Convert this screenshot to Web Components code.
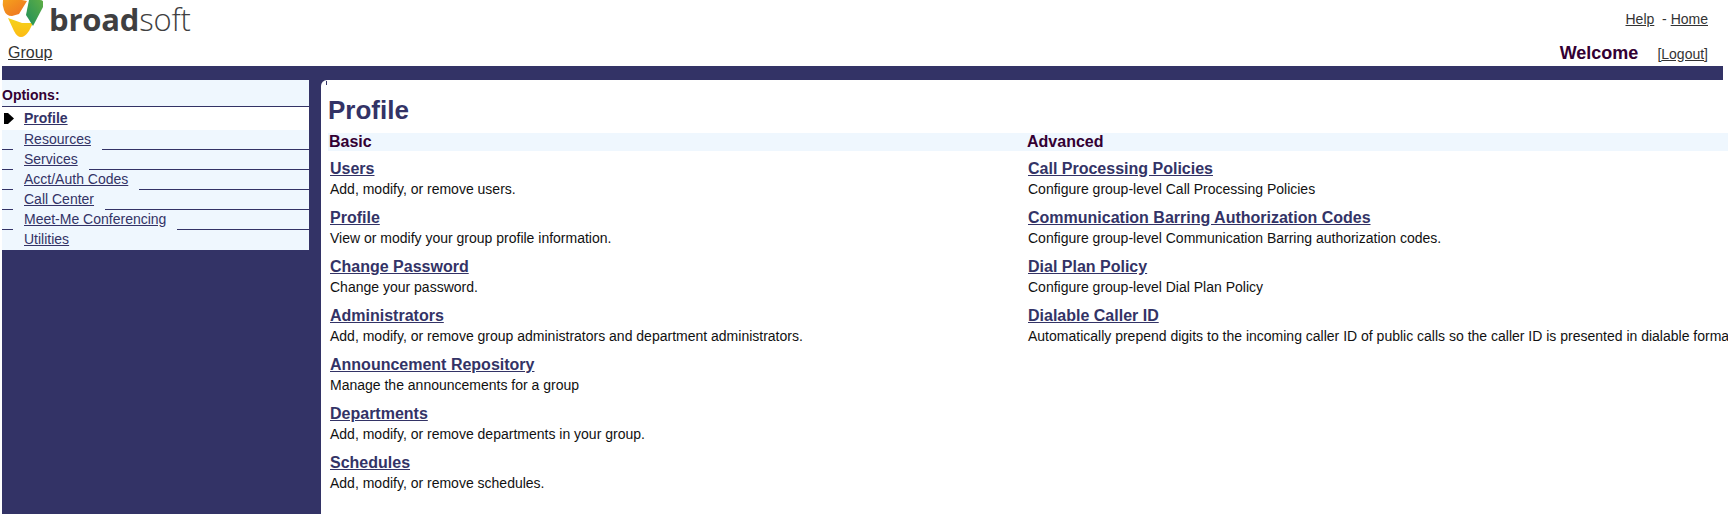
<!DOCTYPE html>
<html lang="en">
<head>
<meta charset="utf-8">
<title>Profile</title>
<style>
  html, body { margin: 0; height: 514px; overflow: hidden; background: #fff; }
  body { font-family: "Liberation Sans", Arial, sans-serif; }
</style>
</head>
<body>
<bw-page>
  <bw-header slot="header"></bw-header>
  <bw-side-nav slot="side">
    <bw-nav-item current>Profile</bw-nav-item>
    <bw-nav-item>Resources</bw-nav-item>
    <bw-nav-item>Services</bw-nav-item>
    <bw-nav-item>Acct/Auth Codes</bw-nav-item>
    <bw-nav-item>Call Center</bw-nav-item>
    <bw-nav-item>Meet-Me Conferencing</bw-nav-item>
    <bw-nav-item last>Utilities</bw-nav-item>
  </bw-side-nav>
  <bw-content slot="main" heading="Profile">
    <bw-section slot="left" title="Basic">
      <bw-link-item label="Users">Add, modify, or remove users.</bw-link-item>
      <bw-link-item label="Profile">View or modify your group profile information.</bw-link-item>
      <bw-link-item label="Change Password">Change your password.</bw-link-item>
      <bw-link-item label="Administrators">Add, modify, or remove group administrators and department administrators.</bw-link-item>
      <bw-link-item label="Announcement Repository">Manage the announcements for a group</bw-link-item>
      <bw-link-item label="Departments">Add, modify, or remove departments in your group.</bw-link-item>
      <bw-link-item label="Schedules">Add, modify, or remove schedules.</bw-link-item>
    </bw-section>
    <bw-section slot="right" title="Advanced">
      <bw-link-item label="Call Processing Policies">Configure group-level Call Processing Policies</bw-link-item>
      <bw-link-item label="Communication Barring Authorization Codes">Configure group-level Communication Barring authorization codes.</bw-link-item>
      <bw-link-item label="Dial Plan Policy">Configure group-level Dial Plan Policy</bw-link-item>
      <bw-link-item label="Dialable Caller ID">Automatically prepend digits to the incoming caller ID of public calls so the caller ID is presented in dialable format.</bw-link-item>
    </bw-section>
  </bw-content>
</bw-page>

<script>
class BwPage extends HTMLElement {
  connectedCallback() {
    this.attachShadow({ mode: 'open' });
    this.shadowRoot.innerHTML = `
      <style>
        :host { display: block; height: 514px; padding: 0 5px 0 2px; box-sizing: border-box; }
        .bar { height: 14px; background: #333366; }
        .shell { display: grid; grid-template-columns: 319px 1fr; height: 434px; background: #333366; }
      </style>
      <slot name="header"></slot>
      <div class="bar"></div>
      <div class="shell">
        <slot name="side"></slot>
        <slot name="main"></slot>
      </div>
    `;
  }
}
customElements.define('bw-page', BwPage);

class BwHeader extends HTMLElement {
  connectedCallback() {
    this.attachShadow({ mode: 'open' });
    this.shadowRoot.innerHTML = `
      <style>
        :host { display: block; height: 66px; margin-left: -2px; font-size: 14px; color: #333; }
        a { color: inherit; text-decoration: underline; }
        .top { display: flex; justify-content: space-between; height: 42px; padding-right: 15px; }
        .brand { display: flex; align-items: flex-start; }
        .brand svg { display: block; margin-left: 2px; }
        .word { margin: 1px 0 0 6px; font-size: 31px; line-height: 36px; color: #3f3f41; font-family: "Open Sans", sans-serif; font-weight: 700; letter-spacing: -0.2px; }
        .word span { font-weight: 300; }
        .util { padding-top: 11px; line-height: 16px; }
        .bottom { display: flex; justify-content: space-between; align-items: flex-end; height: 24px; padding: 0 15px 0 8px; }
        .group { font-size: 16px; line-height: 20px; margin-bottom: 3px; }
        .who { display: flex; align-items: baseline; gap: 19px; margin-bottom: 2px; }
        .who b { font-size: 18px; color: #330033; }
      </style>
      <div class="top">
        <div class="brand">
          <svg width="41" height="38" viewBox="0 0 41 38">
            <defs>
              <linearGradient id="o" x1="0" y1="0" x2="1" y2="1"><stop offset="0" stop-color="#f5a11c"/><stop offset="1" stop-color="#ee6f23"/></linearGradient>
              <linearGradient id="g" x1="1" y1="0" x2="0" y2="1"><stop offset="0" stop-color="#5fae45"/><stop offset="1" stop-color="#1f8f5a"/></linearGradient>
              <linearGradient id="y" x1="0" y1="0" x2="0" y2="1"><stop offset="0" stop-color="#f4d31c"/><stop offset="1" stop-color="#fdbb14"/></linearGradient>
            </defs>
            <path fill="url(#y)" d="M6 18 L20 23 L31 23 L27 31 Q23 37 19 37 Q15 37 12 31 Z"/>
            <path fill="url(#g)" d="M27 0 L38 0 Q43 0 41 7 L31 26 L24 15 Z"/>
            <path fill="url(#o)" d="M1 0 L20 0 L25 1 L17 14 L10 16 Q4 16 2 10 Q0 5 1 0 Z"/>
            <path fill="#fff" d="M18 15 L23 11 L24 19 L19 17 Z"/>
          </svg>
          <div class="word">broad<span>soft</span></div>
        </div>
        <div class="util"><a>Help</a>&nbsp; - <a>Home</a></div>
      </div>
      <div class="bottom">
        <a class="group">Group</a>
        <div class="who"><b>Welcome</b><span>[<a>Logout</a>]</span></div>
      </div>
    `;
  }
}
customElements.define('bw-header', BwHeader);

class BwSideNav extends HTMLElement {
  connectedCallback() {
    this.attachShadow({ mode: 'open' });
    this.shadowRoot.innerHTML = `
      <style>
        :host { display: block; width: 307px; align-self: start; background: #eff7fe; }
        .title { height: 26px; line-height: 31px; font-size: 14px; font-weight: 700; color: #330033; border-bottom: 1px solid #333366; box-sizing: content-box; }
      </style>
      <div class="title">Options:</div>
      <slot></slot>
    `;
  }
}
customElements.define('bw-side-nav', BwSideNav);

class BwNavItem extends HTMLElement {
  connectedCallback() {
    this.attachShadow({ mode: 'open' });
    this.shadowRoot.innerHTML = `
      <style>
        :host { display: flex; height: 20px; font-size: 14px; color: #333366; line-height: 18px; }
        :host([current]) { height: 23px; background: #fff; font-weight: 700; line-height: 22px; }
        .rule { height: 19px; border-bottom: 1px solid #333366; }
        .lead { width: 11px; flex: none; }
        .fill { flex: 1; margin-left: 11px; }
        .label { margin-left: 11px; text-decoration: underline; white-space: nowrap; }
        :host([current]) .rule, :host([last]) .rule { border-bottom: 0; }
        .mark { display: none; }
        :host([current]) .lead { position: relative; }
        :host([current]) .mark { display: block; position: absolute; left: 2px; top: 6px; }
      </style>
      <div class="rule lead"><svg class="mark" width="10" height="11" viewBox="0 0 10 11"><path d="M0 0 H4 L10 5.5 L4 11 H0 Z" fill="#000"/></svg></div>
      <span class="label"><slot></slot></span>
      <div class="rule fill"></div>
    `;
  }
}
customElements.define('bw-nav-item', BwNavItem);

class BwContent extends HTMLElement {
  connectedCallback() {
    this.attachShadow({ mode: 'open' });
    this.shadowRoot.innerHTML = `
      <style>
        :host { display: block; background: #fff; border-top-left-radius: 6px; padding-left: 7px; position: relative; }
        h1 { margin: 0; height: 53px; padding-top: 15px; box-sizing: border-box; font-size: 26px; line-height: 30px; font-weight: 700; color: #333366; }
        .cols { display: grid; grid-template-columns: 698px 1fr; }
        .tick { position: absolute; left: 5px; top: 1px; width: 1px; height: 4px; background: #333366; }
      </style>
      <div class="tick"></div>
      <h1>${this.getAttribute('heading')}</h1>
      <div class="cols">
        <slot name="left"></slot>
        <slot name="right"></slot>
      </div>
    `;
  }
}
customElements.define('bw-content', BwContent);

class BwSection extends HTMLElement {
  connectedCallback() {
    this.attachShadow({ mode: 'open' });
    this.shadowRoot.innerHTML = `
      <style>
        :host { display: block; }
        .band { height: 18px; line-height: 18px; padding-left: 1px; margin-bottom: 8px; background: #eff7fe; font-size: 16px; font-weight: 700; color: #330033; }
      </style>
      <div class="band">${this.getAttribute('title')}</div>
      <slot></slot>
    `;
  }
}
customElements.define('bw-section', BwSection);

class BwLinkItem extends HTMLElement {
  connectedCallback() {
    this.attachShadow({ mode: 'open' });
    this.shadowRoot.innerHTML = `
      <style>
        :host { display: block; height: 49px; padding-left: 2px; box-sizing: border-box; }
        a { display: block; font-size: 16px; line-height: 20px; font-weight: 700; color: #333366; text-decoration: underline; }
        p { margin: 0; font-size: 14px; line-height: 20px; color: #111; white-space: nowrap; }
      </style>
      <a>${this.getAttribute('label')}</a>
      <p><slot></slot></p>
    `;
  }
}
customElements.define('bw-link-item', BwLinkItem);
</script>
</body>
</html>
